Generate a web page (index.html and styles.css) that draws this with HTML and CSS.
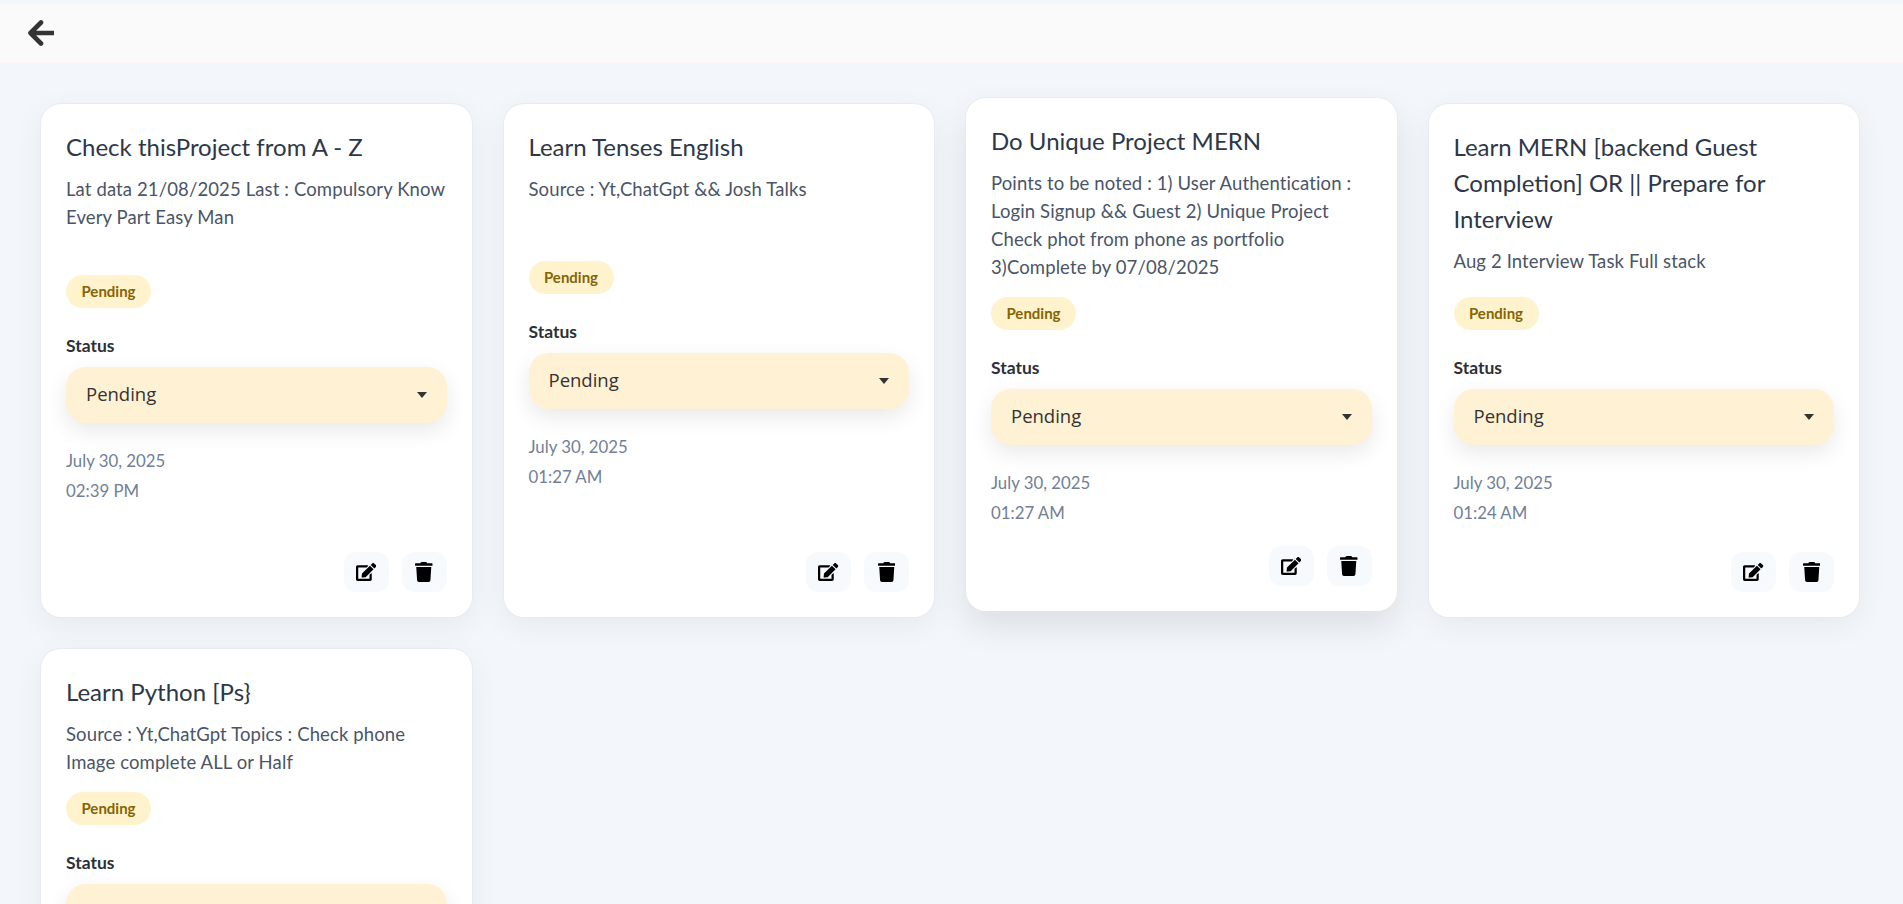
FILE: index.html
```html
<!DOCTYPE html>
<html lang="en">
<head>
<meta charset="utf-8">
<title>Tasks</title>
<link rel="stylesheet" href="styles.css">
</head>
<body>
<header class="topbar">
  <button class="back" aria-label="Back">
    <svg class="back-icon" viewBox="0 0 26 26"><path d="M25 13H3M13 2.500L2.500 13 13 23.500"/></svg>
  </button>
</header>
<main class="grid">
  <article class="card">
    <h2 class="title">Check thisProject from A - Z</h2>
    <p class="desc gap-44">Lat data 21/08/2025 Last : Compulsory Know Every Part Easy Man</p>
    <span class="pill">Pending</span>
    <label class="status-label">Status</label>
    <div class="select"><span>Pending</span><i class="caret"></i></div>
    <p class="date">July 30, 2025</p>
    <p class="date">02:39 PM</p>
    <div class="actions">
      <button class="act" aria-label="Edit"><svg class="ic-edit" viewBox="0 0 576 512"><path d="M402.6 83.2l90.2 90.2c3.8 3.8 3.8 10 0 13.8L274.4 405.6l-92.8 10.3c-12.4 1.4-22.9-9.1-21.500-21.500l10.300-92.800L388.800 83.200c3.800-3.800 10-3.800 13.800 0zm162-22.900l-48.800-48.800c-15.200-15.200-39.900-15.200-55.200 0l-35.400 35.400c-3.800 3.800-3.800 10 0 13.800l90.200 90.200c3.800 3.800 10 3.800 13.800 0l35.400-35.400c15.200-15.300 15.200-40 0-55.200zM384 346.200V448H64V128h229.800c3.200 0 6.200-1.300 8.500-3.500l40-40c7.600-7.600 2.200-20.500-8.500-20.500H48C21.500 64 0 85.500 0 112v352c0 26.500 21.500 48 48 48h352c26.500 0 48-21.500 48-48V306.200c0-10.700-12.900-16-20.500-8.500l-40 40c-2.200 2.300-3.500 5.300-3.500 8.500z"/></svg></button>
      <button class="act" aria-label="Delete"><svg class="ic-trash" viewBox="0 0 448 512"><path d="M432 32H312l-9.400-18.700A24 24 0 0 0 281.100 0H166.800a23.720 23.720 0 0 0-21.400 13.300L136 32H16A16 16 0 0 0 0 48v32a16 16 0 0 0 16 16h416a16 16 0 0 0 16-16V48a16 16 0 0 0-16-16zM53.200 467a48 48 0 0 0 47.900 45h245.800a48 48 0 0 0 47.900-45L416 128H32z"/></svg></button>
    </div>
  </article>

  <article class="card">
    <h2 class="title">Learn Tenses English</h2>
    <p class="desc gap-58">Source : Yt,ChatGpt &amp;&amp; Josh Talks</p>
    <span class="pill">Pending</span>
    <label class="status-label">Status</label>
    <div class="select"><span>Pending</span><i class="caret"></i></div>
    <p class="date">July 30, 2025</p>
    <p class="date">01:27 AM</p>
    <div class="actions">
      <button class="act" aria-label="Edit"><svg class="ic-edit" viewBox="0 0 576 512"><path d="M402.6 83.2l90.2 90.2c3.8 3.8 3.8 10 0 13.8L274.4 405.6l-92.8 10.3c-12.4 1.4-22.9-9.1-21.500-21.500l10.300-92.800L388.800 83.200c3.800-3.800 10-3.800 13.800 0zm162-22.900l-48.800-48.800c-15.200-15.200-39.900-15.200-55.200 0l-35.400 35.400c-3.800 3.800-3.800 10 0 13.800l90.200 90.200c3.800 3.800 10 3.800 13.800 0l35.400-35.400c15.200-15.300 15.200-40 0-55.200zM384 346.200V448H64V128h229.800c3.200 0 6.200-1.300 8.500-3.500l40-40c7.600-7.600 2.200-20.500-8.500-20.500H48C21.500 64 0 85.500 0 112v352c0 26.500 21.500 48 48 48h352c26.500 0 48-21.500 48-48V306.200c0-10.700-12.900-16-20.500-8.500l-40 40c-2.200 2.300-3.500 5.300-3.500 8.500z"/></svg></button>
      <button class="act" aria-label="Delete"><svg class="ic-trash" viewBox="0 0 448 512"><path d="M432 32H312l-9.400-18.700A24 24 0 0 0 281.100 0H166.800a23.720 23.720 0 0 0-21.400 13.300L136 32H16A16 16 0 0 0 0 48v32a16 16 0 0 0 16 16h416a16 16 0 0 0 16-16V48a16 16 0 0 0-16-16zM53.200 467a48 48 0 0 0 47.900 45h245.800a48 48 0 0 0 47.900-45L416 128H32z"/></svg></button>
    </div>
  </article>

  <article class="card raised">
    <h2 class="title">Do Unique Project MERN</h2>
    <p class="desc gap-16">Points to be noted : 1) User Authentication : Login Signup &amp;&amp; Guest 2) Unique Project Check phot from phone as portfolio 3)Complete by 07/08/2025</p>
    <span class="pill">Pending</span>
    <label class="status-label">Status</label>
    <div class="select"><span>Pending</span><i class="caret"></i></div>
    <p class="date">July 30, 2025</p>
    <p class="date">01:27 AM</p>
    <div class="actions">
      <button class="act" aria-label="Edit"><svg class="ic-edit" viewBox="0 0 576 512"><path d="M402.6 83.2l90.2 90.2c3.8 3.8 3.8 10 0 13.8L274.4 405.6l-92.8 10.3c-12.4 1.4-22.9-9.1-21.500-21.500l10.300-92.800L388.800 83.200c3.800-3.800 10-3.800 13.800 0zm162-22.900l-48.800-48.800c-15.200-15.200-39.900-15.200-55.200 0l-35.400 35.400c-3.800 3.800-3.800 10 0 13.800l90.200 90.200c3.800 3.800 10 3.800 13.800 0l35.400-35.400c15.200-15.300 15.200-40 0-55.200zM384 346.200V448H64V128h229.800c3.200 0 6.200-1.300 8.500-3.500l40-40c7.600-7.600 2.200-20.500-8.500-20.500H48C21.500 64 0 85.500 0 112v352c0 26.500 21.500 48 48 48h352c26.500 0 48-21.500 48-48V306.200c0-10.700-12.900-16-20.500-8.500l-40 40c-2.200 2.300-3.500 5.300-3.500 8.500z"/></svg></button>
      <button class="act" aria-label="Delete"><svg class="ic-trash" viewBox="0 0 448 512"><path d="M432 32H312l-9.400-18.700A24 24 0 0 0 281.100 0H166.800a23.720 23.720 0 0 0-21.400 13.300L136 32H16A16 16 0 0 0 0 48v32a16 16 0 0 0 16 16h416a16 16 0 0 0 16-16V48a16 16 0 0 0-16-16zM53.200 467a48 48 0 0 0 47.900 45h245.800a48 48 0 0 0 47.900-45L416 128H32z"/></svg></button>
    </div>
  </article>

  <article class="card">
    <h2 class="title">Learn MERN [backend Guest Completion] OR || Prepare for Interview</h2>
    <p class="desc gap-22">Aug 2 Interview Task Full stack</p>
    <span class="pill">Pending</span>
    <label class="status-label">Status</label>
    <div class="select"><span>Pending</span><i class="caret"></i></div>
    <p class="date">July 30, 2025</p>
    <p class="date">01:24 AM</p>
    <div class="actions">
      <button class="act" aria-label="Edit"><svg class="ic-edit" viewBox="0 0 576 512"><path d="M402.6 83.2l90.2 90.2c3.8 3.8 3.8 10 0 13.8L274.4 405.6l-92.8 10.3c-12.4 1.4-22.9-9.1-21.500-21.500l10.300-92.800L388.800 83.200c3.800-3.800 10-3.800 13.800 0zm162-22.900l-48.800-48.800c-15.200-15.200-39.900-15.200-55.200 0l-35.400 35.400c-3.800 3.800-3.800 10 0 13.800l90.200 90.200c3.800 3.800 10 3.800 13.800 0l35.400-35.400c15.200-15.300 15.200-40 0-55.200zM384 346.200V448H64V128h229.800c3.200 0 6.200-1.300 8.500-3.500l40-40c7.600-7.600 2.200-20.500-8.500-20.500H48C21.500 64 0 85.500 0 112v352c0 26.500 21.500 48 48 48h352c26.500 0 48-21.500 48-48V306.200c0-10.700-12.900-16-20.500-8.500l-40 40c-2.200 2.300-3.500 5.300-3.500 8.500z"/></svg></button>
      <button class="act" aria-label="Delete"><svg class="ic-trash" viewBox="0 0 448 512"><path d="M432 32H312l-9.400-18.700A24 24 0 0 0 281.100 0H166.800a23.720 23.720 0 0 0-21.400 13.300L136 32H16A16 16 0 0 0 0 48v32a16 16 0 0 0 16 16h416a16 16 0 0 0 16-16V48a16 16 0 0 0-16-16zM53.200 467a48 48 0 0 0 47.900 45h245.800a48 48 0 0 0 47.900-45L416 128H32z"/></svg></button>
    </div>
  </article>

  <article class="card">
    <h2 class="title">Learn Python [Ps}</h2>
    <p class="desc gap-16">Source : Yt,ChatGpt Topics : Check phone Image complete ALL or Half</p>
    <span class="pill">Pending</span>
    <label class="status-label">Status</label>
    <div class="select"><span>Pending</span><i class="caret"></i></div>
    <p class="date">July 30, 2025</p>
    <p class="date">01:20 AM</p>
  </article>
</main>
</body>
</html>
```

FILE: styles.css
```css
* { box-sizing: border-box; }
html, body { margin: 0; padding: 0; }
body {
  background: #f3f6fa;
  font-family: "Lato", "Noto Sans", sans-serif;
  padding-top: 4px;
}
.topbar {
  height: 59px;
  background: #fafafa;
  border-bottom: 1px solid #fdf5f5;
  display: flex;
  align-items: center;
  padding-left: 28px;
}
.back {
  border: 0;
  background: none;
  padding: 0;
  display: flex;
}
.back-icon {
  width: 26px;
  height: 26px;
  fill: none;
  stroke: #333;
  stroke-width: 4.600;
  stroke-linecap: round;
  stroke-linejoin: round;
}
.grid {
  display: grid;
  grid-template-columns: repeat(4, 1fr);
  gap: 32px;
  padding: 41px 44px 41px 41px;
}
.card {
  background: #fff;
  border-radius: 20px;
  padding: 25px;
  display: flex;
  flex-direction: column;
  align-items: flex-start;
  box-shadow: 0 0 0 1px rgba(226, 232, 240, 0.55), 0 8px 32px rgba(20, 30, 60, 0.06);
}
.raised {
  transform: translateY(-6px);
  box-shadow: 0 0 0 1px rgba(226, 232, 240, 0.55), 0 15px 35px rgba(0, 0, 0, 0.1);
}
.title {
  margin: 0 0 10px;
  font-size: 24px;
  font-weight: 400;
  line-height: 36px;
  color: #2d3748;
}
.desc {
  margin: 0;
  font-size: 18.500px;
  letter-spacing: 0.120px;
  line-height: 28px;
  color: #4a5568;
}
.gap-16 { margin-bottom: 16px; }
.gap-22 { margin-bottom: 22px; }
.gap-44 { margin-bottom: 44px; }
.gap-58 { margin-bottom: 58px; }
.pill {
  height: 33px;
  width: 85px;
  border-radius: 17px;
  background: #fff3cd;
  color: #856404;
  font-size: 15px;
  font-weight: 700;
  padding-bottom: 1px;
  display: flex;
  align-items: center;
  justify-content: center;
}
.status-label {
  margin-top: 26px;
  margin-bottom: 9px;
  line-height: 24px;
  font-size: 17.500px;
  font-weight: 700;
  color: #2d3036;
}
.select {
  align-self: stretch;
  height: 56px;
  border-radius: 20px;
  background: #fff1d4;
  box-shadow: 0 8px 22px rgba(0, 0, 0, 0.09);
  display: flex;
  align-items: center;
  justify-content: space-between;
  padding: 0 20px;
  font-family: "Open Sans", sans-serif;
  font-size: 18.500px;
  line-height: 24px;
  color: #333;
}
.select span { margin-top: -2px; }
.caret {
  width: 0;
  height: 0;
  border-left: 5.500px solid transparent;
  border-right: 5.500px solid transparent;
  border-top: 6.500px solid #333;
}
.date {
  margin: 0;
  font-size: 16.800px;
  line-height: 30px;
  color: #718096;
}
.select + .date { margin-top: 23px; }
.actions {
  align-self: flex-end;
  margin-top: auto;
  padding-top: 18px;
  display: flex;
  gap: 13px;
}
.act {
  width: 45px;
  height: 40px;
  border: 0;
  border-radius: 12px;
  background: #f7fafc;
  padding: 0;
  display: flex;
  align-items: center;
  justify-content: center;
}
.ic-edit { width: 20.250px; height: 18px; fill: #000; }
.ic-trash { width: 17.500px; height: 20px; fill: #000; }
```
